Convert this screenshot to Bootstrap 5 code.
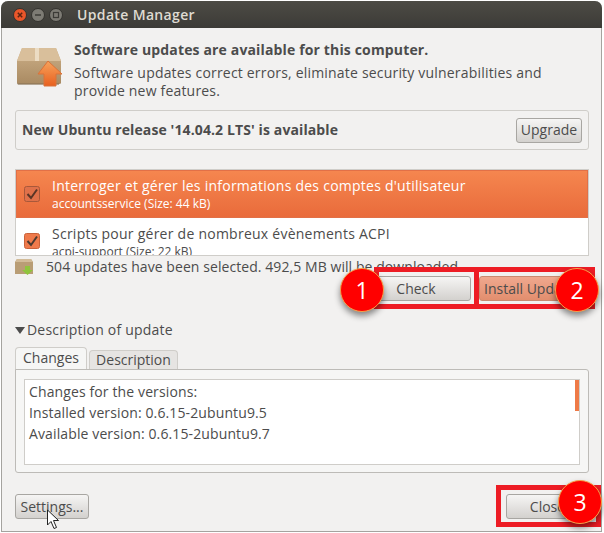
<!DOCTYPE html>
<html lang="en">
<head>
<meta charset="utf-8">
<title>Update Manager</title>
<link href="https://cdn.jsdelivr.net/npm/bootstrap@5.3.0/dist/css/bootstrap.min.css" rel="stylesheet">
<style>
html,body{margin:0;background:#fff;width:604px;height:533px;overflow:hidden}
body{font-family:"Open Sans","Noto Sans",sans-serif;font-size:14px;color:#4c4c4c;line-height:18px}
.uwin{position:absolute;left:1px;top:1px;width:601px;height:531px;background:#f2f1f0;border:1px solid #a5a39f;border-top:0;border-radius:7px 7px 0 0}
.utitle{height:27px;margin:0 -1px;padding-left:12px;gap:4px;background:linear-gradient(#4d4b45,#3c3b37);border-radius:7px 7px 0 0;color:#dfdbd2;font-weight:600;font-size:14px;letter-spacing:.35px}
.wbtn{width:14px;height:14px;flex:none}
.utname{margin-left:10px}
.ubody{padding:0 12px 0 13px}
.uhead{height:82px;padding-top:15px}
.uhead .pkg{width:50px;margin-right:9px;margin-top:2px}
.uhead b,.relbox b{font-weight:700;color:#4c4c4c}
.uhead b{display:block;height:25px;margin-top:-4px;line-height:22px;font-size:14px;letter-spacing:.15px}
.uhead p{margin:0;line-height:18px;letter-spacing:.19px;width:480px}
.relbox{height:40px;background:#f2f1f0;border:1px solid #cfcdc9;border-radius:3px;padding:0 6px 0 6px}
.relbox b{letter-spacing:.11px}
.ubtn{font-size:14px;line-height:16px;padding:0;color:#4c4c4c;border:1px solid #a8a6a2;border-radius:3px;background:linear-gradient(#f6f5f4,#d3d1ce);height:25px}
.ubtn:hover{color:#4c4c4c;border-color:#a8a6a2}
.ulist{margin-top:19px;height:87px;overflow:hidden;border:1px solid #cfcdc9;border-radius:0;background:#fff}
.urow{height:48px;padding:4px 0 0 36px;position:relative;border:0;flex:none;background:#fff}
.urow.sel{background:linear-gradient(#f5864f,#e96b3b);border:1px solid #e27047;color:#fff;padding-left:35px;padding-top:3px}
.urow .sub{font-size:12px;line-height:16px;margin-top:-1px}
.urow .nm{line-height:23px;letter-spacing:.25px}
.ucheck{position:absolute;left:8px;top:15px;width:16px;height:16px}
.sel .ucheck{left:7px}
.ustat{height:21px;margin-bottom:1px}
.ustat svg{margin-right:12px}
.ustat span{letter-spacing:.07px}
.ubtnrow{margin-top:-2px;height:25px;margin-bottom:1px}
.bchk{width:110px;height:25px}
.binst{width:110px;height:25px;margin-left:8px;padding-left:4px;text-align:left;background:linear-gradient(#f0a88e,#e28e6e);border-color:#c98a70;white-space:nowrap;overflow:hidden}
.uexp{margin-top:20px;height:18px;color:#4c4c4c;letter-spacing:.2px}
.uexp i{display:block;width:0;height:0;border:5px solid transparent;border-top:7px solid #4c4c4c;border-bottom:0;margin-right:2px}
.utabs{margin-top:8px;height:23px;border:0;flex-wrap:nowrap;align-items:flex-end}
.utabs .nav-link{padding:0;color:#4c4c4c;text-align:center;border:1px solid #cfcdc9;border-bottom:0;border-radius:4px 4px 0 0;background:#e6e4e2;height:21px;line-height:18px;width:89px;margin-left:2px}
.utabs .nav-link.active{width:72px;height:23px;margin:0;background:#f6f6f5;color:#4c4c4c;line-height:19px;border-color:#cfcdc9}
.upanel{height:104px;margin-top:-1px;border:1px solid #bdbbb7;border-radius:0 3px 3px 3px;background:#f6f6f5;padding:9px 8px 8px 8px;position:relative;z-index:0}
.utext{height:86px;background:#fff;border:1px solid #cfcdc9;padding:1px 4px 0;position:relative;line-height:21px;letter-spacing:.12px}
.uthumb{position:absolute;right:0;top:0;width:4px;height:31px;background:#ee7a47}
.ufoot{margin-top:21px;height:25px}
.bset{width:74px;line-height:14px}
.bclose{width:83px;line-height:14px}
.redbox{position:absolute;border:5px solid #ed1c24;pointer-events:none}
.numdot{position:absolute;width:44px;height:44px;border-radius:50%;background:#f00;border:1px solid #f7a14a;color:#fff;font-size:23px;line-height:42px;text-align:center;box-shadow:0 4px 6px rgba(0,0,0,.45);font-family:"Open Sans",sans-serif}
.ucursor{position:absolute;left:46px;top:509px}
</style>
</head>
<body>
<div class="uwin">
  <div class="utitle d-flex align-items-center">
    <svg class="wbtn" viewBox="0 0 14 14"><circle cx="7" cy="7" r="6.500" fill="#e9562a" stroke="#33322e"/><path d="M4.800 4.800 L9.200 9.200 M9.200 4.800 L4.800 9.200" stroke="#5a2412" stroke-width="1.500"/></svg>
    <svg class="wbtn" viewBox="0 0 14 14"><circle cx="7" cy="7" r="6.500" fill="#7d7b74" stroke="#33322e"/><path d="M4 7 H10" stroke="#3c3b37" stroke-width="1.500"/></svg>
    <svg class="wbtn" viewBox="0 0 14 14"><circle cx="7" cy="7" r="6.500" fill="#7d7b74" stroke="#33322e"/><rect x="4.500" y="4.500" width="5" height="5" fill="none" stroke="#3c3b37" stroke-width="1.200"/></svg>
    <span class="utname">Update Manager</span>
  </div>
  <div class="ubody">
    <div class="uhead d-flex">
      <svg class="pkg flex-shrink-0" width="50" height="46" viewBox="0 0 50 46">
        <defs>
          <linearGradient id="box" x1="0" y1="0" x2="0" y2="1"><stop offset="0" stop-color="#cdb088"/><stop offset="1" stop-color="#a98a62"/></linearGradient>
          <linearGradient id="arr" x1="0" y1="0" x2="0" y2="1"><stop offset="0" stop-color="#f7a35c"/><stop offset="1" stop-color="#e8601f"/></linearGradient>
        </defs>
        <path d="M2 38 L2 16 L7 3 L41 3 L46 16 L46 38 Q46 39 44 39 L4 39 Q2 39 2 38Z" fill="url(#box)"/>
        <path d="M2 16 L7 3 L41 3 L46 16Z" fill="#d9bf9b"/>
        <rect x="20" y="3" width="4" height="13" fill="#ecdcc3"/>
        <path d="M2 38 h42 v2 H3Z" fill="#8a7457" opacity=".6"/>
        <path d="M33 16 L47 29 L41 29 L41 41 L29 41 L29 29 L23 29Z" fill="url(#arr)" stroke="#d9733a" stroke-width="1"/>
      </svg>
      <div>
        <b>Software updates are available for this computer.</b>
        <p>Software updates correct errors, eliminate security vulnerabilities and provide new features.</p>
      </div>
    </div>
    <div class="relbox d-flex align-items-center justify-content-between">
      <b>New Ubuntu release '14.04.2 LTS' is available</b>
      <button type="button" class="btn ubtn" style="width:66px">Upgrade</button>
    </div>
    <div class="ulist d-flex flex-column">
      <div class="urow sel">
        <svg class="ucheck" viewBox="0 0 16 16"><rect x=".5" y=".5" width="15" height="15" rx="2" fill="#e0714a" stroke="#a8583a"/><path d="M3.500 8 L7 12 L13 3.500" fill="none" stroke="#5a3526" stroke-width="2"/></svg>
        <div class="nm">Interroger et gérer les informations des comptes d'utilisateur</div>
        <div class="sub">accountsservice (Size: 44 kB)</div>
      </div>
      <div class="urow">
        <svg class="ucheck" viewBox="0 0 16 16"><rect x=".5" y=".5" width="15" height="15" rx="2" fill="#ef7a4b" stroke="#c9623a"/><path d="M3.500 8 L7 12 L13 3.500" fill="none" stroke="#4c3a30" stroke-width="2"/></svg>
        <div class="nm">Scripts pour gérer de nombreux évènements ACPI</div>
        <div class="sub">acpi-support (Size: 22 kB)</div>
      </div>
    </div>
    <div class="ustat d-flex align-items-center">
      <svg width="19" height="16" viewBox="0 0 19 16"><path d="M0 15 V3 L2 0 H16 L18 3 V15Z" fill="#b99d75"/><path d="M0 3 L2 0 H16 L18 3Z" fill="#d2bb98"/><path d="M10 7 h5 v4 h3 l-5.500 5 -5.500-5 h3Z" fill="#8fc43c"/></svg>
      <span>504 updates have been selected. 492,5 MB will be downloaded.</span>
    </div>
    <div class="ubtnrow d-flex justify-content-end">
      <button type="button" class="btn ubtn bchk">Check</button>
      <button type="button" class="btn ubtn binst">Install Updates</button>
    </div>
    <div class="uexp d-flex align-items-center"><i></i><span>Description of update</span></div>
    <ul class="nav nav-tabs utabs">
      <li class="nav-item"><a class="nav-link active" href="#">Changes</a></li>
      <li class="nav-item"><a class="nav-link" href="#">Description</a></li>
    </ul>
    <div class="upanel">
      <div class="utext">
        <div>Changes for the versions:</div>
        <div>Installed version: 0.6.15-2ubuntu9.5</div>
        <div>Available version: 0.6.15-2ubuntu9.7</div>
        <span class="uthumb"></span>
      </div>
    </div>
    <div class="ufoot d-flex justify-content-between">
      <button type="button" class="btn ubtn bset">Settings...</button>
      <button type="button" class="btn ubtn bclose">Close</button>
    </div>
  </div>
</div>
<div class="redbox" style="left:374px;top:267px;width:105px;height:42px"></div>
<div class="redbox" style="left:474px;top:267px;width:121px;height:42px"></div>
<div class="redbox" style="left:496px;top:485px;width:105px;height:42px"></div>
<div class="numdot" style="left:340px;top:268px">1</div>
<div class="numdot" style="left:555px;top:268px">2</div>
<div class="numdot" style="left:558px;top:480px">3</div>
<svg class="ucursor" width="14" height="21" viewBox="0 0 14 21"><path d="M1.500 1 V16 L5 12.500 L8 19.500 L10.500 18.500 L7.500 11.500 H12.500Z" fill="#fff" stroke="#222" stroke-width="1"/></svg>
<script src="https://cdn.jsdelivr.net/npm/bootstrap@5.3.0/dist/js/bootstrap.bundle.min.js"></script>
</body>
</html>
